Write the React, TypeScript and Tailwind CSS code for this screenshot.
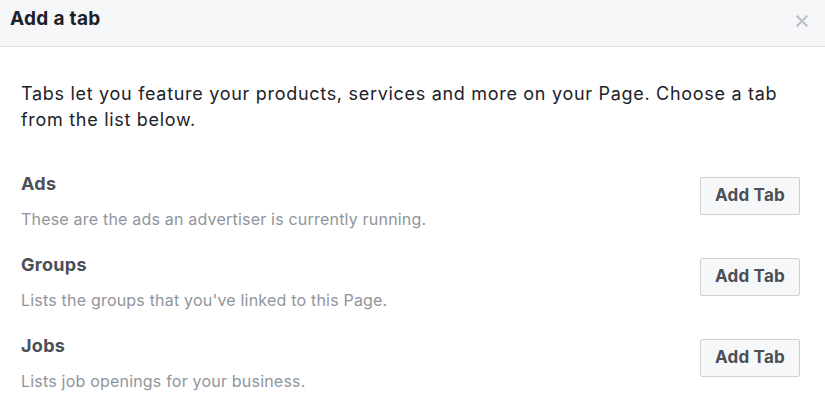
import React from "react";

const tabs = [
  { name: "Ads", description: "These are the ads an advertiser is currently running." },
  { name: "Groups", description: "Lists the groups that you've linked to this Page." },
  { name: "Jobs", description: "Lists job openings for your business." },
];

export default function App() {
  return (
    <div className="w-[825px] h-[397px] overflow-hidden bg-white font-['Inter',sans-serif]">
      {/* Header */}
      <div className="h-[47px] flex items-start justify-between pl-[10px] pr-[17px] bg-[#f6f7f9] border-b border-[#dddfe2]">
        <h3 className="pt-[7px] text-[19px] leading-[24px] tracking-[0.3px] font-bold text-[#1d2129]">Add a tab</h3>
        <button className="mt-[15px] text-[#bec2c9]">
          <svg width="12" height="12" viewBox="0 0 12 12">
            <path d="M1.5 1.5 L10.5 10.5 M10.5 1.5 L1.5 10.5" stroke="currentColor" strokeWidth="2.4" strokeLinecap="square" />
          </svg>
        </button>
      </div>

      {/* Body */}
      <div className="pl-[21px] pr-[25px] pt-[34px]">
        <p className="text-[18px] leading-[26px] tracking-[0.7px] text-[#1d2129]">
          Tabs let you feature your products, services and more on your Page. Choose a tab from the list below.
        </p>

        <div className="mt-[39px] flex flex-col">
          {tabs.map(t => (
            <div key={t.name} className="h-[81px] flex items-start justify-between">
              <div>
                <div className="text-[18px] leading-[24px] tracking-[0.3px] font-bold text-[#4b4f56]">{t.name}</div>
                <div className="mt-[13px] text-[16px] leading-[20px] tracking-[0.2px] text-[#90949c]">{t.description}</div>
              </div>
              <button className="mt-[5px] w-[100px] h-[38px] rounded-[2px] border border-[#ced0d4] bg-[#f6f7f9] text-[17px] tracking-[0.2px] font-bold text-[#4b4f56]">
                Add Tab
              </button>
            </div>
          ))}
        </div>
      </div>
    </div>
  );
}
